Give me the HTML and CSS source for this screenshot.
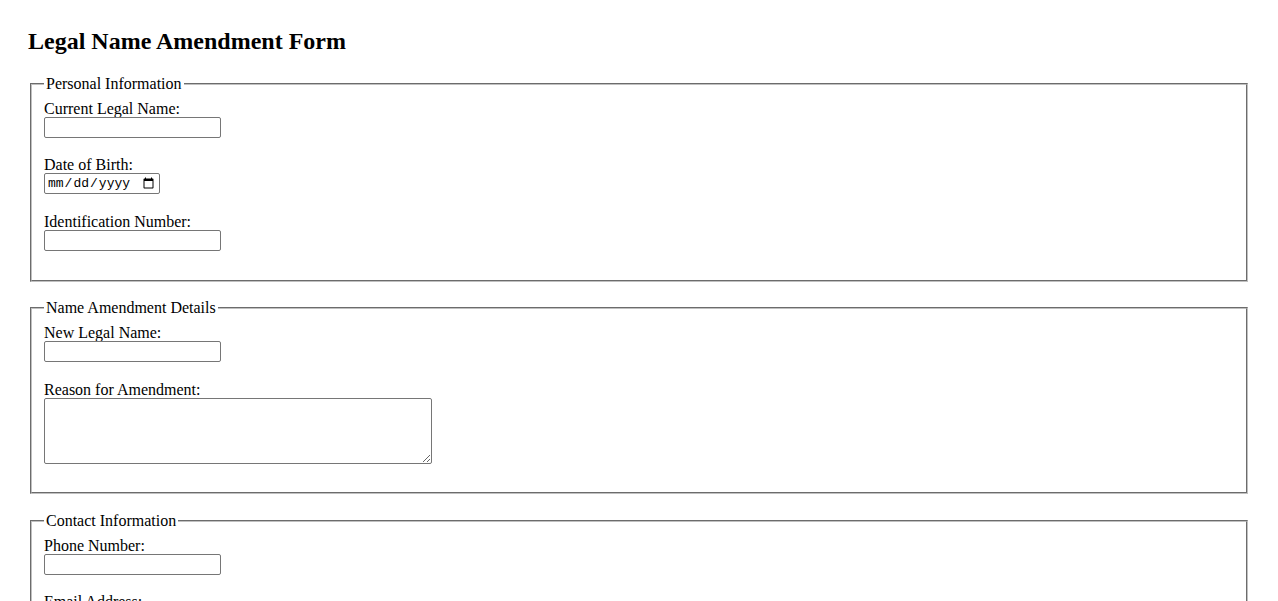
FILE: index.html
```html
<!DOCTYPE html>
<html lang="en">
<head>
<meta charset="utf-8">
<title>Legal Name Amendment Form</title>
<link rel="stylesheet" href="styles.css">
</head>
<body>
<main class="page">
  <h2 class="page-title">Legal Name Amendment Form</h2>
  <form class="form">
    <fieldset class="section">
      <legend class="section-legend">Personal Information</legend>
      <div class="field">
        <label class="field-label" for="current-name">Current Legal Name:</label>
        <input class="field-input" type="text" id="current-name" name="current-name">
      </div>
      <div class="field">
        <label class="field-label" for="dob">Date of Birth:</label>
        <input class="field-input field-date" type="date" id="dob" name="dob">
      </div>
      <div class="field">
        <label class="field-label" for="id-number">Identification Number:</label>
        <input class="field-input" type="text" id="id-number" name="id-number">
      </div>
    </fieldset>

    <fieldset class="section">
      <legend class="section-legend">Name Amendment Details</legend>
      <div class="field">
        <label class="field-label" for="new-name">New Legal Name:</label>
        <input class="field-input" type="text" id="new-name" name="new-name">
      </div>
      <div class="field">
        <label class="field-label" for="reason">Reason for Amendment:</label>
        <textarea class="field-textarea" id="reason" name="reason"></textarea>
      </div>
    </fieldset>

    <fieldset class="section">
      <legend class="section-legend">Contact Information</legend>
      <div class="field">
        <label class="field-label" for="phone">Phone Number:</label>
        <input class="field-input" type="tel" id="phone" name="phone">
      </div>
      <div class="field">
        <label class="field-label" for="email">Email Address:</label>
        <input class="field-input" type="email" id="email" name="email">
      </div>
    </fieldset>

    <button class="submit-button" type="submit">Submit Amendment</button>
  </form>
</main>
</body>
</html>
```

FILE: styles.css
```css
html,
body {
  margin: 0;
  padding: 0;
  background: #ffffff;
}

body {
  font-family: "Liberation Serif", "Times New Roman", serif;
  font-size: 16px;
  color: #000000;
}

.page {
  padding: 8px 28px;
}

.page-title {
  font-size: 24px;
  font-weight: bold;
  line-height: normal;
  margin: 19.92px 0;
}

.form {
  margin: 0;
}

.section {
  margin: 0 2px 17.4px;
  padding: 7px 12px 10px;
  border: 2px groove rgb(192, 192, 192);
  min-inline-size: min-content;
}

.section-legend {
  padding: 0 2px;
  line-height: normal;
}

.field {
  display: flex;
  flex-direction: column;
  align-items: flex-start;
  padding-bottom: 18.6px;
}

.field-label {
  display: block;
  line-height: normal;
}

.field-input {
  box-sizing: border-box;
  width: 177px;
  height: 21px;
  margin: -1px 0 0;
  padding: 1px 2px;
  border: 1px solid #767676;
  border-radius: 2px;
  background: #ffffff;
  font-family: "Liberation Sans", Arial, sans-serif;
  font-size: 13.333px;
}

.field-date {
  width: 116px;
  font-family: "Liberation Mono", "Courier New", monospace;
  font-size: 13px;
}

.field-textarea {
  box-sizing: border-box;
  width: 388px;
  height: 66px;
  margin: -1px 0 0;
  padding: 2px;
  border: 1px solid #767676;
  border-radius: 2px;
  font-family: "Liberation Mono", "Courier New", monospace;
  font-size: 13.333px;
}

.submit-button {
  font-family: "Liberation Sans", Arial, sans-serif;
  font-size: 13.333px;
}
```
